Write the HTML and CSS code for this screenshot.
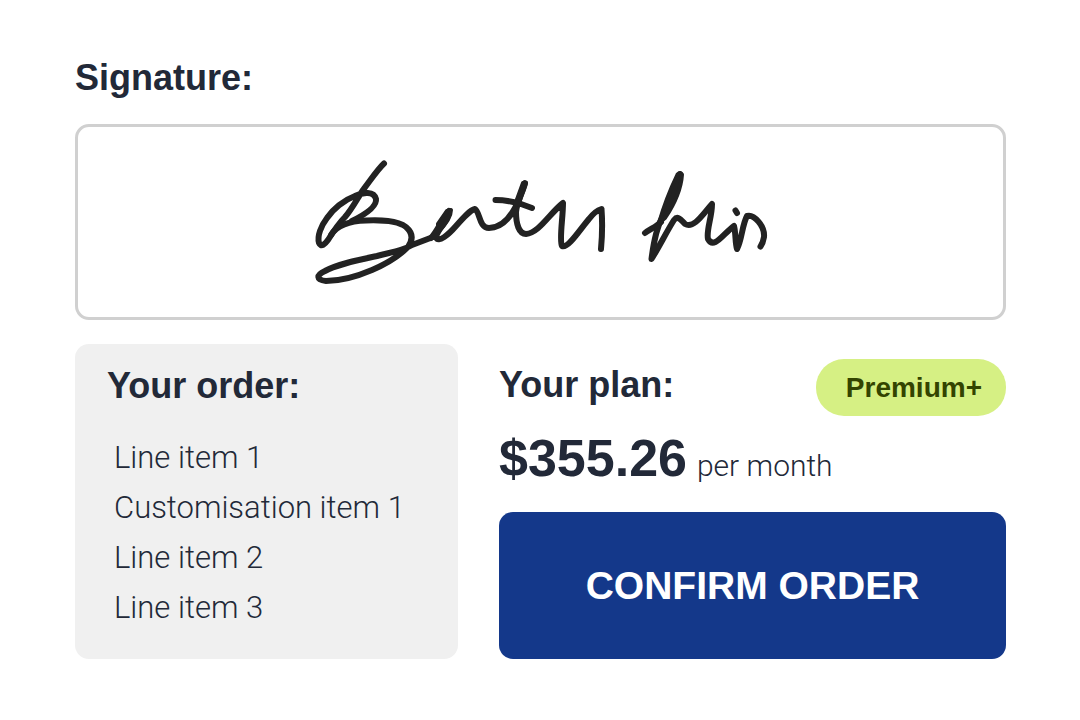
FILE: index.html
```html
<!DOCTYPE html>
<html lang="en">
<head>
  <meta charset="UTF-8">
  <title>Confirm your order</title>
  <meta name="viewport" content="width=device-width, initial-scale=1.0">
  <link rel="stylesheet" href="styles.css">
</head>
<body>
<main class="checkout">
  <section class="signature">
    <h2>Signature:</h2>
    <div class="signature-box">
      <svg class="signature-ink" viewBox="308 155 465 135" role="img" aria-label="Handwritten signature">
        <!-- first name -->
        <path d="M384 163.5C377 170 370 181 363 190C357 199 352 209 345 217C338 224 333 232 328 240C325 244 321 248 319 243C317 236 321 226 327 218C333 209 344 200 355 196C363 192 374 191 376 199C377 206 366 214 352 221"/>
        <path d="M331 235C337 225 349 221 366 220.5C380 220 397 220 406 227C413 233 413 240 408 247C400 255 386 264 372 270C358 276 341 281 326 281C316 280 316 275 325 271C338 264 358 260 377 256C392 252 402 251 412 245L433 237"/>
        <path d="M431 238C437 232 441 221 449 211C449 221 438 228 436 237C438 244 449 234 456 226C463 218 470 210 475 209C480 212 479 228 489 228C500 228 509 219 515 208C518 201 522 192 525 183C523 192 517 201 516 212C516 224 519 234 526 234C539 233 550 213 563 203C563 218 559 240 562 246C568 249 581 228 589 219Q595 211 601.5 209C602.5 222 602 238 601 249"/>
        <path d="M495.500 200C504 200 514 202 521 204L532 208"/>
        <!-- last name -->
        <path d="M645 233C650 229 656 227 661 222"/>
        <path d="M680 174C676 189 668 204 662 218C656 229 653 247 651.500 259C659 247 667 231 674 220C678 215 681 220 685 224C694 229 703 214 712 204C712 217 706 231 708 239C714 250 723 234 734 226C736 234 735 242 737 249C742 240 742 225 747 216C754 214 765 226 764 237Q763 243 760.500 246.500"/>
        <path d="M735.500 210.500L737 213"/>
        <!-- thicker down strokes -->
        <path class="fill" d="M447 211L451 210C451 218 444 226 438 232L438 224Z"/>
        <path class="fill" d="M523 183L526 183L519 203L515 205Z"/>
        <path class="fill" d="M677.500 174.500Q680 172 682 174.500C681 190 673 206 665 218L659 223C663 209 670 190 677.500 174.500Z"/>
      </svg>
    </div>
  </section>

  <div class="columns">
    <section class="order">
      <h2>Your order:</h2>
      <ul>
        <li>Line item 1</li>
        <li>Customisation item 1</li>
        <li>Line item 2</li>
        <li>Line item 3</li>
      </ul>
    </section>

    <section class="plan">
      <div class="plan-head">
        <h2>Your plan:</h2>
        <span class="badge">Premium+</span>
      </div>
      <p class="price"><strong>$355.26</strong> <span class="period">per month</span></p>
      <button type="button" class="confirm">CONFIRM ORDER</button>
    </section>
  </div>
</main>
</body>
</html>
```
FILE: styles.css
```css
* {
  box-sizing: border-box;
}
body {
  margin: 0;
  background: #fff;
  color: #222938;
  font-family: "Liberation Sans", Arial, sans-serif;
}
.checkout {
  padding: 56px 74px 60px 75px;
}
h2 {
  margin: 0;
  font-size: 36px;
  line-height: 44px;
  font-weight: bold;
}
.signature-box {
  display: flex;
  justify-content: center;
  margin-top: 24px;
  padding: 28px 20px 27px;
  border: 3px solid #d0d0d0;
  border-radius: 14px;
}
.signature-ink {
  display: block;
  width: 465px;
  max-width: 100%;
  height: auto;
}
.signature-ink path {
  fill: none;
  stroke: #222;
  stroke-width: 6;
  stroke-linecap: round;
  stroke-linejoin: round;
}
.signature-ink .fill {
  fill: #222;
  stroke-width: 4;
}
.columns {
  display: grid;
  grid-template-columns: 383fr 507fr;
  gap: 41px;
  margin-top: 24px;
}
.order {
  padding: 20px 32px 26px;
  background: #f0f0f0;
  border-radius: 14px;
}
.order ul {
  margin: 25px 0 0;
  padding: 0 0 0 7px;
  list-style: none;
  font-family: Roboto, sans-serif;
  font-size: 31px;
  font-weight: 300;
  line-height: 50px;
}
.plan {
  display: flex;
  flex-direction: column;
  padding-top: 15px;
}
.plan-head {
  display: flex;
  align-items: baseline;
  justify-content: space-between;
}
.badge {
  padding: 0 24px 0 30px;
  border-radius: 28px;
  background: #d6f084;
  color: #334400;
  font-size: 28px;
  font-weight: bold;
  line-height: 57px;
}
.price {
  display: flex;
  align-items: baseline;
  gap: 10px;
  margin: 12px 0 24px;
}
.price strong {
  font-size: 52px;
  line-height: 60px;
}
.period {
  font-family: Roboto, sans-serif;
  font-size: 30px;
  font-weight: 300;
  line-height: 32px;
}
.confirm {
  flex: 1;
  border: 0;
  border-radius: 14px;
  background: #14388a;
  color: #fff;
  font-family: inherit;
  font-size: 39px;
  font-weight: bold;
  cursor: pointer;
}
```
